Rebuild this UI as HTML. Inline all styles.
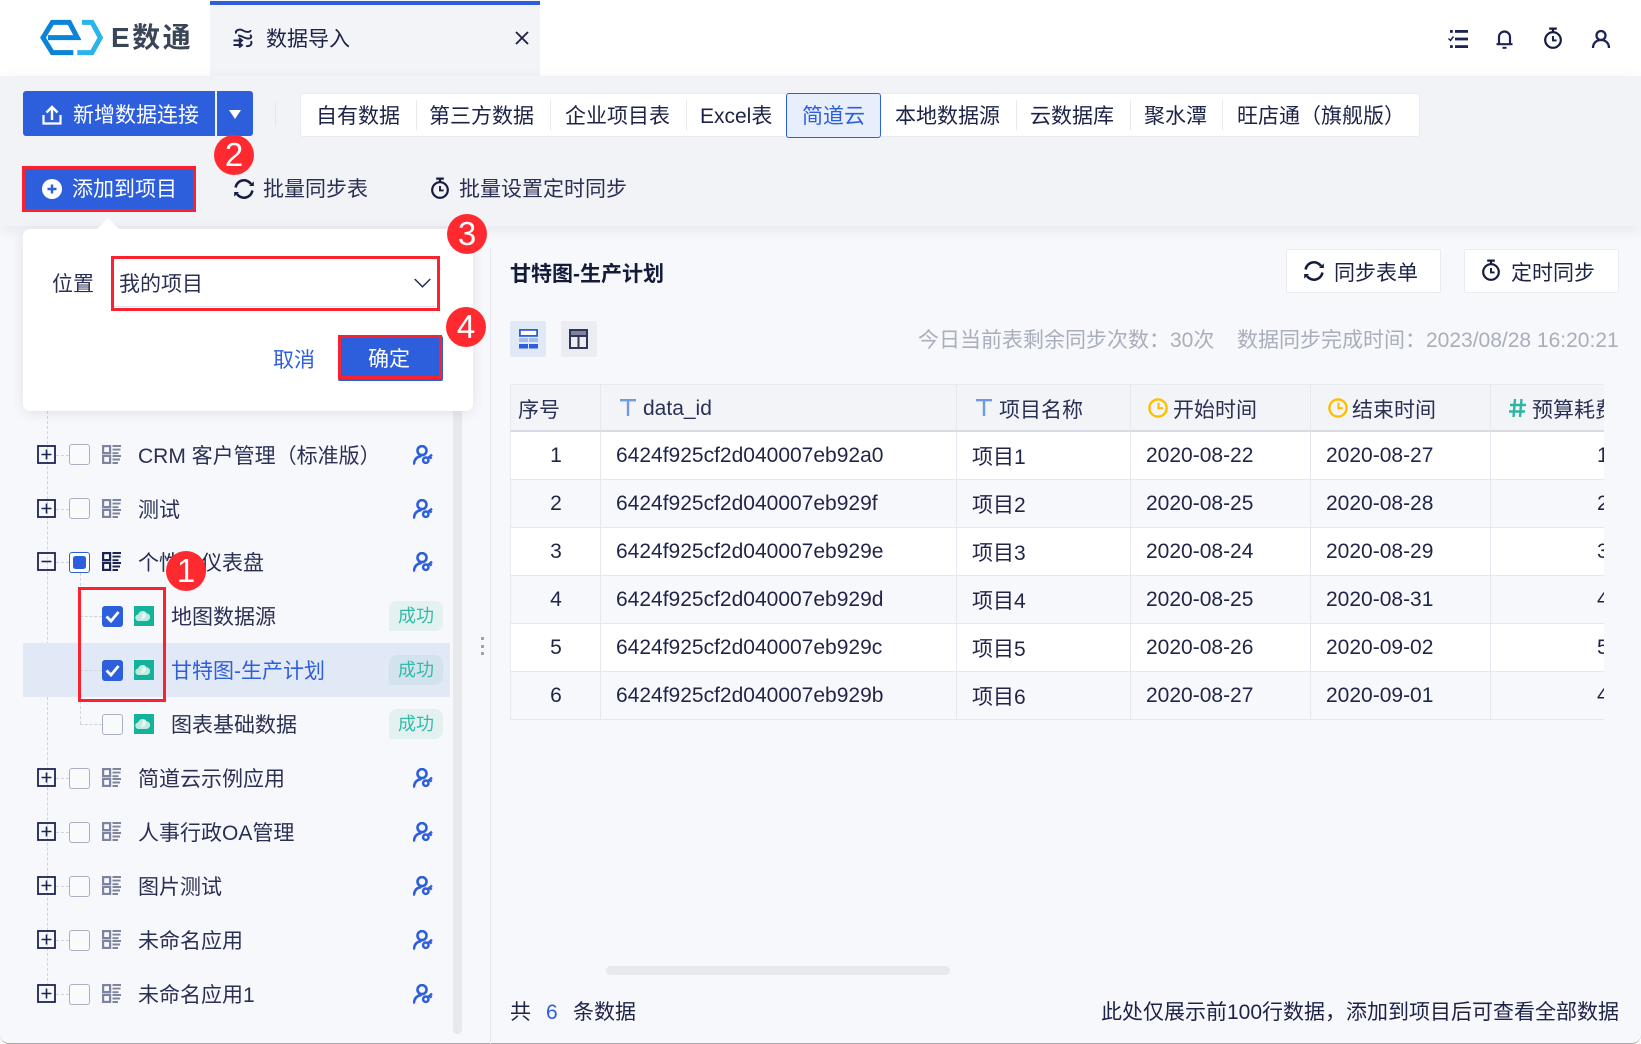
<!DOCTYPE html>
<html lang="zh"><head><meta charset="utf-8"><title>数据导入</title>
<style>
html,body{margin:0;padding:0;width:1641px;height:1044px;overflow:hidden;background:#fff}
body{position:relative;font-family:"Liberation Sans","Noto Sans CJK SC",sans-serif;color:#1d2347}
.a{position:absolute;box-sizing:border-box}
.t{position:absolute;white-space:nowrap;line-height:30px;font-size:21px;height:30px;margin-top:2px}
.tr{color:#2a3054}
.w{color:#fff}
.b{color:#2d5fdc}
.rc{position:absolute;width:40px;height:40px;border-radius:50%;background:#ff2a30;color:#fff;font-size:33px;line-height:40px;text-align:center;z-index:30}
.sep{position:absolute;width:1px;top:100px;height:30px;background:#e8eaef}
.pb{position:absolute;left:37px;width:19px;height:19px}
.cb{position:absolute;width:21px;height:21px;border:1.5px solid #a9b0c6;border-radius:3px;box-sizing:border-box;background:#f9fafc}
.cc{background:#2d5fdc;border:none}
.hd{position:absolute;height:0;border-top:1px dashed #d0d3dc}
.badge{position:absolute;left:389px;width:54px;height:30px;border-radius:8px 8px 8px 0;background:#e3f2f1;color:#32bba8;font-size:18px;line-height:31px;text-align:center}
svg{position:absolute;overflow:visible}
.gi{left:101.5px;color:#7e849f}
table{border-collapse:separate;border-spacing:0;table-layout:fixed;width:1181px;font-size:21px;position:absolute;left:0;top:0}
th{height:43px;background:#f3f4f8;font-weight:400;text-align:left;padding:2px 0 0 0;border-top:1px solid #e8eaf0;border-right:1px solid #e6e8ef;border-bottom:2px solid #d8dae2;box-sizing:content-box;color:#2a3054}
th:first-child,td:first-child{border-left:1px solid #e8eaf0}
td{height:47px;padding:0 0 0 15px;border-right:1px solid #e6e8ef;border-bottom:1px solid #e6e8ef;color:#1f2547;white-space:nowrap}
tr.o td{background:#fff}
tr.e td{background:#f7f8fb}
td:first-child{padding:0 0 0 1px;text-align:center}
td:last-child{padding-left:106px}
</style></head><body>
<svg width="0" height="0" style="position:absolute"><defs>
<symbol id="plus" viewBox="0 0 19 19"><rect x="1" y="1" width="17" height="17" fill="none" stroke="#1c2453" stroke-width="1.8"/><path d="M4.5 9.5h10M9.5 4.5v10" stroke="#1c2453" stroke-width="1.6"/></symbol>
<symbol id="minus" viewBox="0 0 19 19"><rect x="1" y="1" width="17" height="17" fill="none" stroke="#1c2453" stroke-width="1.8"/><path d="M4.5 9.5h10" stroke="#1c2453" stroke-width="1.6"/></symbol>
<symbol id="grid" viewBox="0 0 19 19"><rect x="1.1" y="1.1" width="7" height="7" fill="none" stroke="currentColor" stroke-width="2.2"/><rect x="1.1" y="10.9" width="7" height="7" fill="none" stroke="currentColor" stroke-width="2.2"/><path d="M10.500 1h8.500M10.500 4.600h8M10.500 8.200h6M10.500 11h8.500M10.500 14.500h7.500M10.500 18h5.500" stroke="currentColor" stroke-width="1.900"/></symbol>
<symbol id="key" viewBox="0 0 20 20"><circle cx="9" cy="5.600" r="4.500" fill="none" stroke="#2d5fdc" stroke-width="2.600"/><path d="M1 18.500C1.400 14.500 3.500 12 7.500 11.200" fill="none" stroke="#2d5fdc" stroke-width="2.600" stroke-linecap="round"/><circle cx="12.800" cy="15.200" r="2.700" fill="none" stroke="#2d5fdc" stroke-width="2.500"/><path d="M14.800 13.200L19 9.600M16.600 11.600l2 2" fill="none" stroke="#2d5fdc" stroke-width="2.400"/></symbol>
<symbol id="cloud" viewBox="0 0 20 20"><rect width="20" height="20" fill="#12b39a"/><path d="M4.800 15a3.300 3.300 0 0 1-.5-6.600A4.300 4.300 0 0 1 8.600 5a4.500 4.500 0 0 1 4 2.200 3.700 3.700 0 0 1 3.500 3.800 3.800 3.800 0 0 1-3.800 4z" fill="#bfeade"/><path d="M8.800 5.500a3.800 3.800 0 0 1 2 6.500 3.800 3.800 0 0 1-3.500 1.500" fill="#e2f8f2"/></symbol>
<symbol id="sync" viewBox="0 0 22 22"><path d="M2.600 9.500A8.500 8.500 0 0 1 18 6" fill="none" stroke="#151c40" stroke-width="2.500"/><path d="M16 8h4.800V3.400z" fill="#151c40"/><path d="M19.400 12.500A8.500 8.500 0 0 1 4 16" fill="none" stroke="#151c40" stroke-width="2.500"/><path d="M6 14H1.200v4.600z" fill="#151c40"/></symbol>
<symbol id="timer" viewBox="0 0 20 22"><circle cx="10" cy="13" r="7.800" fill="none" stroke="#151c40" stroke-width="2.200"/><path d="M6.200 1.600h7.600M10 1.600v3.600" stroke="#151c40" stroke-width="2.200" fill="none"/><path d="M10 9v4.400h3.600" fill="none" stroke="#151c40" stroke-width="1.900"/></symbol>
<symbol id="clock" viewBox="0 0 20 20"><circle cx="10" cy="10" r="8.600" fill="none" stroke="#ffbf00" stroke-width="2.400"/><path d="M10.500 4.800v5.400H15" fill="none" stroke="#ffbf00" stroke-width="2.200"/></symbol>
<symbol id="tt" viewBox="0 0 16 17"><path d="M0 1.200h16M8 1.200V17" fill="none" stroke="#6f9ae0" stroke-width="2.400"/></symbol>
</defs></svg>

<!-- header -->
<div class="a" style="left:210px;top:0;width:330px;height:76px;background:#f2f4f8"></div>
<div class="a" style="left:210px;top:1px;width:330px;height:4px;background:#2d5fdc"></div>
<svg style="left:20px;top:10px" width="190" height="55" viewBox="0 0 570 165"><path d="M84 83H172L148 37H97L69 83L97 128H160" fill="none" stroke="#0a84d8" stroke-width="15"/><path d="M186 37H216L241 83L216 128H172" fill="none" stroke="#2ab5ea" stroke-width="15"/></svg>
<span class="t" style="left:111px;top:21px;font-size:28px;font-weight:700;letter-spacing:2.500px;color:#3a4558">E数通</span>
<svg style="left:232px;top:27px" width="22" height="22" viewBox="0 0 22 22"><g fill="none" stroke="#1d2347" stroke-width="1.900"><path d="M4 6.500C3 3 8 1.500 11 3.500S19 5.500 18.500 3"/><path d="M18 8c2.500 1.500 1 4-2.500 3.500S9 8.500 6 8.500"/><path d="M1.500 13.500h8M7 11l3 2.500-3 2.500M1.500 18h8M7 15.700l3 2.400-3 2.400M19 14c1.500 3-1 6-5 5"/></g></svg>
<span class="t" style="left:266px;top:23px">数据导入</span>
<svg style="left:515px;top:31px" width="14" height="14" viewBox="0 0 14 14"><path d="M1 1l12 12M13 1L1 13" stroke="#1d2347" stroke-width="1.900"/></svg>
<svg style="left:1448px;top:30px" width="20" height="18" viewBox="0 0 20 18"><g fill="#1c2453"><rect x="7" y="0" width="13" height="2.800"/><rect x="7" y="7.600" width="13" height="2.800"/><rect x="7" y="15.200" width="13" height="2.800"/><rect x="2" y="0" width="2.800" height="2.800"/><rect x="2" y="15.200" width="2.800" height="2.800"/></g><path d="M.5 8.500l2 2 3-4" fill="none" stroke="#1c2453" stroke-width="1.500"/></svg>
<svg style="left:1496px;top:30px" width="17" height="19" viewBox="0 0 17 19"><path d="M.5 14.200h16M3 14V7a5.500 5.500 0 0 1 11 0v7" fill="none" stroke="#1c2453" stroke-width="2.200"/><path d="M6.500 17.800h4" stroke="#1c2453" stroke-width="2"/></svg>
<svg style="left:1543px;top:27px" width="20" height="22"><use href="#timer"/></svg>
<svg style="left:1592px;top:30px" width="18" height="18" viewBox="0 0 18 18"><circle cx="9" cy="5.500" r="4.500" fill="none" stroke="#1c2453" stroke-width="2.300"/><path d="M1 18c0-4.500 3-8 8-8s8 3.500 8 8" fill="none" stroke="#1c2453" stroke-width="2.300"/></svg>

<!-- main -->
<div class="a" style="left:0;top:76px;width:1641px;height:968px;background:#f7f8fb;border-bottom:1px solid #a8a8a8;border-radius:0 0 9px 9px;overflow:hidden"></div>
<div class="a" style="left:0;top:76px;width:1641px;height:150px;background:#f2f3f7;box-shadow:0 4px 14px rgba(20,30,70,.07)"></div>

<!-- toolbar -->
<div class="a" style="left:23px;top:91px;width:192px;height:45px;background:#2d5fdc;border-radius:3px 0 0 3px"></div>
<div class="a" style="left:217px;top:91px;width:36px;height:45px;background:#2d5fdc;border-radius:0 3px 3px 0"></div>
<svg style="left:42px;top:104px" width="20" height="22" viewBox="0 0 20 22"><path d="M1.500 11v8.500h17V11" fill="none" stroke="#fff" stroke-width="2.200"/><path d="M10 16V3M4.500 8.500L10 3l5.500 5.500" fill="none" stroke="#fff" stroke-width="2.400"/></svg>
<span class="t w" style="left:73px;top:99px">新增数据连接</span>
<svg style="left:229px;top:110px" width="12" height="9"><path d="M0 0h12L6 9z" fill="#fff"/></svg>
<div class="a" style="left:275px;top:102px;width:1px;height:24px;background:#e4e6ec"></div>

<div class="a" style="left:300px;top:93px;width:1120px;height:44px;background:#fff;border:1px solid #e9ebf0;border-radius:3px"></div>
<div class="sep" style="left:416px"></div><div class="sep" style="left:550px"></div><div class="sep" style="left:686px"></div><div class="sep" style="left:1016px"></div><div class="sep" style="left:1130px"></div><div class="sep" style="left:1222px"></div>
<span class="t" style="left:316px;top:100px">自有数据</span>
<span class="t" style="left:429px;top:100px">第三方数据</span>
<span class="t" style="left:565px;top:100px">企业项目表</span>
<span class="t" style="left:700px;top:100px">Excel表</span>
<div class="a" style="left:786px;top:93px;width:95px;height:45px;background:#e8effc;border:1.500px solid #2d5fdc;border-radius:3px"></div>
<span class="t b" style="left:802px;top:100px">简道云</span>
<span class="t" style="left:895px;top:100px">本地数据源</span>
<span class="t" style="left:1030px;top:100px">云数据库</span>
<span class="t" style="left:1144px;top:100px">聚水潭</span>
<span class="t" style="left:1237px;top:100px">旺店通（旗舰版）</span>

<!-- action row -->
<div class="a" style="left:22px;top:166px;width:174px;height:46px;background:#2d5fdc;border:3px solid #fb2230"></div>
<svg style="left:42px;top:179px" width="20" height="20" viewBox="0 0 20 20"><circle cx="10" cy="10" r="10" fill="#fff"/><path d="M5.500 10h9M10 5.500v9" stroke="#2d5fdc" stroke-width="2.400"/></svg>
<span class="t w" style="left:72px;top:173px">添加到项目</span>
<svg style="left:233px;top:178px" width="22" height="22"><use href="#sync"/></svg>
<span class="t" style="left:263px;top:173px;color:#2a3054">批量同步表</span>
<svg style="left:430px;top:177px" width="20" height="22"><use href="#timer"/></svg>
<span class="t" style="left:459px;top:173px;color:#2a3054">批量设置定时同步</span>

<!-- left tree -->
<div class="a" style="left:453px;top:390px;width:9px;height:644px;background:#e8e9ed;border-radius:0 0 4px 4px"></div>
<div class="a" style="left:490px;top:249px;width:1px;height:795px;background:#e6e8ee"></div>
<div class="a" style="left:481px;top:637px;width:3px;height:3px;background:#a79fb8"></div>
<div class="a" style="left:481px;top:645px;width:3px;height:3px;background:#a79fb8"></div>
<div class="a" style="left:481px;top:652px;width:3px;height:3px;background:#a79fb8"></div>
<div class="a" style="left:47px;top:411px;width:0;height:575px;border-left:1px dashed #d0d3dc"></div>
<div class="a" style="left:80px;top:573px;width:0;height:151px;border-left:1px dashed #d0d3dc"></div>
<div class="a" style="left:23px;top:643px;width:427px;height:54px;background:#e2e9f6"></div>

<div class="hd" style="left:56px;top:455px;width:13px"></div><div class="hd" style="left:56px;top:509px;width:13px"></div><div class="hd" style="left:56px;top:562px;width:13px"></div><div class="hd" style="left:56px;top:778px;width:13px"></div><div class="hd" style="left:56px;top:832px;width:13px"></div><div class="hd" style="left:56px;top:886px;width:13px"></div><div class="hd" style="left:56px;top:940px;width:13px"></div><div class="hd" style="left:56px;top:994px;width:13px"></div>
<div class="hd" style="left:80px;top:616px;width:22px"></div><div class="hd" style="left:80px;top:670px;width:22px"></div><div class="hd" style="left:80px;top:724px;width:22px"></div>

<svg class="pb" style="top:445px"><use href="#plus"/></svg><div class="cb" style="left:69px;top:444px"></div><svg class="gi" style="top:445px" width="19" height="19"><use href="#grid"/></svg><span class="t tr" style="left:138px;top:440px">CRM 客户管理（标准版）</span><svg style="left:413px;top:445px" width="20" height="20"><use href="#key"/></svg>
<svg class="pb" style="top:499px"><use href="#plus"/></svg><div class="cb" style="left:69px;top:498px"></div><svg class="gi" style="top:499px" width="19" height="19"><use href="#grid"/></svg><span class="t tr" style="left:138px;top:494px">测试</span><svg style="left:413px;top:499px" width="20" height="20"><use href="#key"/></svg>
<svg class="pb" style="top:552px"><use href="#minus"/></svg><div class="cb" style="left:69px;top:552px;border-color:#2d5fdc;background:#fff"><div class="a" style="left:2.500px;top:2.500px;width:13px;height:13px;background:#2d5fdc;border-radius:2.500px"></div></div><svg class="gi" style="top:552px;color:#1c2453" width="19" height="19"><use href="#grid"/></svg><span class="t tr" style="left:138px;top:547px">个性化仪表盘</span><svg style="left:413px;top:552px" width="20" height="20"><use href="#key"/></svg>

<div class="cb cc" style="left:102px;top:606px"><svg style="left:3px;top:4px" width="15" height="13" viewBox="0 0 15 13"><path d="M1.500 6.500L6 11l7.500-9" fill="none" stroke="#fff" stroke-width="2.800"/></svg></div><svg style="left:134px;top:606px" width="20" height="20"><use href="#cloud"/></svg><span class="t tr" style="left:171px;top:601px">地图数据源</span><div class="badge" style="top:601px">成功</div>
<div class="cb cc" style="left:102px;top:660px"><svg style="left:3px;top:4px" width="15" height="13" viewBox="0 0 15 13"><path d="M1.500 6.500L6 11l7.500-9" fill="none" stroke="#fff" stroke-width="2.800"/></svg></div><svg style="left:134px;top:660px" width="20" height="20"><use href="#cloud"/></svg><span class="t b" style="left:171px;top:655px">甘特图-生产计划</span><div class="badge" style="top:655px;background:#d3e3ee">成功</div>
<div class="cb" style="left:102px;top:714px"></div><svg style="left:134px;top:714px" width="20" height="20"><use href="#cloud"/></svg><span class="t tr" style="left:171px;top:709px">图表基础数据</span><div class="badge" style="top:709px">成功</div>

<svg class="pb" style="top:768px"><use href="#plus"/></svg><div class="cb" style="left:69px;top:768px"></div><svg class="gi" style="top:768px" width="19" height="19"><use href="#grid"/></svg><span class="t tr" style="left:138px;top:763px">简道云示例应用</span><svg style="left:413px;top:768px" width="20" height="20"><use href="#key"/></svg>
<svg class="pb" style="top:822px"><use href="#plus"/></svg><div class="cb" style="left:69px;top:822px"></div><svg class="gi" style="top:822px" width="19" height="19"><use href="#grid"/></svg><span class="t tr" style="left:138px;top:817px">人事行政OA管理</span><svg style="left:413px;top:822px" width="20" height="20"><use href="#key"/></svg>
<svg class="pb" style="top:876px"><use href="#plus"/></svg><div class="cb" style="left:69px;top:876px"></div><svg class="gi" style="top:876px" width="19" height="19"><use href="#grid"/></svg><span class="t tr" style="left:138px;top:871px">图片测试</span><svg style="left:413px;top:876px" width="20" height="20"><use href="#key"/></svg>
<svg class="pb" style="top:930px"><use href="#plus"/></svg><div class="cb" style="left:69px;top:930px"></div><svg class="gi" style="top:930px" width="19" height="19"><use href="#grid"/></svg><span class="t tr" style="left:138px;top:925px">未命名应用</span><svg style="left:413px;top:930px" width="20" height="20"><use href="#key"/></svg>
<svg class="pb" style="top:984px"><use href="#plus"/></svg><div class="cb" style="left:69px;top:984px"></div><svg class="gi" style="top:984px" width="19" height="19"><use href="#grid"/></svg><span class="t tr" style="left:138px;top:979px">未命名应用1</span><svg style="left:413px;top:984px" width="20" height="20"><use href="#key"/></svg>

<!-- red box 1 -->
<div class="a" style="left:78px;top:587px;width:88px;height:115px;border:3.500px solid #fb2230;z-index:20"></div>

<!-- popover -->
<svg style="left:96px;top:218px;z-index:11" width="24" height="12"><path d="M0 12L12 0l12 12z" fill="#fff"/></svg>
<div class="a" style="left:23px;top:229px;width:450px;height:182px;background:#fff;border-radius:7px;box-shadow:0 2px 12px rgba(30,40,90,.10);z-index:10"></div>
<div style="position:absolute;left:0;top:0;z-index:12">
<span class="t" style="left:52px;top:268px;color:#2a3054">位置</span>
<div class="a" style="left:114px;top:306px;width:322px;height:1px;background:#e0e2e8"></div>
<span class="t" style="left:119px;top:268px;color:#2a3054">我的项目</span>
<svg style="left:414px;top:278px" width="17" height="10"><path d="M.700 1l7.800 7.800L16.300 1" fill="none" stroke="#2a3054" stroke-width="1.500"/></svg>
<div class="a" style="left:111px;top:256px;width:329px;height:55px;border:3px solid #fb2230"></div>
<span class="t b" style="left:273px;top:344px">取消</span>
<div class="a" style="left:338px;top:336px;width:105px;height:45px;background:#2d5fdc;border-radius:2px"></div>
<div class="a" style="left:338px;top:335px;width:104px;height:44px;background:#2d5fdc;border:3px solid #fb2230"></div>
<span class="t w" style="left:368px;top:343px">确定</span>
</div>

<!-- right panel -->
<span class="t" style="left:510px;top:258px;font-weight:700;color:#141a3a">甘特图-生产计划</span>
<div class="a" style="left:1286px;top:249px;width:155px;height:44px;background:#fff;border:1px solid #e9ebf0;border-radius:2px"></div>
<svg style="left:1303px;top:260px" width="22" height="22"><use href="#sync"/></svg>
<span class="t" style="left:1334px;top:257px">同步表单</span>
<div class="a" style="left:1464px;top:249px;width:155px;height:44px;background:#fff;border:1px solid #e9ebf0;border-radius:2px"></div>
<svg style="left:1481px;top:259px" width="20" height="22"><use href="#timer"/></svg>
<span class="t" style="left:1511px;top:257px">定时同步</span>

<div class="a" style="left:510px;top:321px;width:36px;height:36px;background:#e2e9f6;border-radius:2px"></div>
<svg style="left:519px;top:329px" width="19" height="20" viewBox="0 0 19 20"><rect x=".9" y=".9" width="17.200" height="6" fill="#fff" stroke="#2d5fdc" stroke-width="1.800"/><rect x="0" y="9" width="9" height="4" fill="#a6bdef"/><rect x="10" y="9" width="9" height="4" fill="#a6bdef"/><rect x="0" y="15" width="9" height="4.500" fill="#2d5fdc"/><rect x="10" y="15" width="9" height="4.500" fill="#2d5fdc"/></svg>
<div class="a" style="left:561px;top:321px;width:36px;height:36px;background:#ebedf2;border-radius:2px"></div>
<svg style="left:569px;top:329px" width="19" height="20" viewBox="0 0 19 20"><rect x="0" y="0" width="19" height="6" fill="#7e849f"/><rect x="1" y="1" width="17" height="18" fill="none" stroke="#2f3657" stroke-width="2"/><path d="M1 7h17M9.500 7v12" stroke="#2f3657" stroke-width="2"/></svg>
<span class="t" style="left:918px;top:324px;color:#a9aebc">今日当前表剩余同步次数：30次</span>
<span class="t" style="left:1237px;top:324px;color:#a9aebc">数据同步完成时间：2023/08/28 16:20:21</span>

<div class="a" style="left:510px;top:384px;width:1094px;height:339px;overflow:hidden">
<table><colgroup><col style="width:91px"><col style="width:356px"><col style="width:174px"><col style="width:180px"><col style="width:180px"><col style="width:200px"></colgroup>
<tr><th style="padding-left:7px">序号</th><th style="padding-left:42px">data_id</th><th style="padding-left:42px">项目名称</th><th style="padding-left:42px">开始时间</th><th style="padding-left:41px">结束时间</th><th style="padding-left:41px">预算耗费</th></tr>
<tr class="o"><td>1</td><td>6424f925cf2d040007eb92a0</td><td>项目1</td><td>2020-08-22</td><td>2020-08-27</td><td>1</td></tr>
<tr class="e"><td>2</td><td>6424f925cf2d040007eb929f</td><td>项目2</td><td>2020-08-25</td><td>2020-08-28</td><td>2</td></tr>
<tr class="o"><td>3</td><td>6424f925cf2d040007eb929e</td><td>项目3</td><td>2020-08-24</td><td>2020-08-29</td><td>3</td></tr>
<tr class="e"><td>4</td><td>6424f925cf2d040007eb929d</td><td>项目4</td><td>2020-08-25</td><td>2020-08-31</td><td>4</td></tr>
<tr class="o"><td>5</td><td>6424f925cf2d040007eb929c</td><td>项目5</td><td>2020-08-26</td><td>2020-09-02</td><td>5</td></tr>
<tr class="e"><td>6</td><td>6424f925cf2d040007eb929b</td><td>项目6</td><td>2020-08-27</td><td>2020-09-01</td><td>4</td></tr>
</table>
<svg style="left:110px;top:15px" width="16" height="17"><use href="#tt"/></svg>
<svg style="left:466px;top:15px" width="16" height="17"><use href="#tt"/></svg>
<svg style="left:638px;top:14px" width="20" height="20"><use href="#clock"/></svg>
<svg style="left:818px;top:14px" width="20" height="20"><use href="#clock"/></svg>
<svg style="left:999px;top:15px" width="17" height="18" viewBox="0 0 17 18"><path d="M1 6h16M0 12.500h16M6 0L4.500 18M12.500 0L11 18" fill="none" stroke="#2fb5a5" stroke-width="2.400"/></svg>
</div>

<div class="a" style="left:606px;top:966px;width:344px;height:9px;background:#e8e9ed;border-radius:4.500px"></div>
<span class="t" style="left:510px;top:996px">共</span>
<span class="t b" style="left:546px;top:996px">6</span>
<span class="t" style="left:573px;top:996px">条数据</span>
<span class="t" style="left:1101px;top:996px">此处仅展示前100行数据，添加到项目后可查看全部数据</span>

<!-- number circles -->
<div class="rc" style="left:166px;top:551px">1</div>
<div class="rc" style="left:214px;top:135px">2</div>
<div class="rc" style="left:447px;top:214px">3</div>
<div class="rc" style="left:446px;top:307px">4</div>
</body></html>
